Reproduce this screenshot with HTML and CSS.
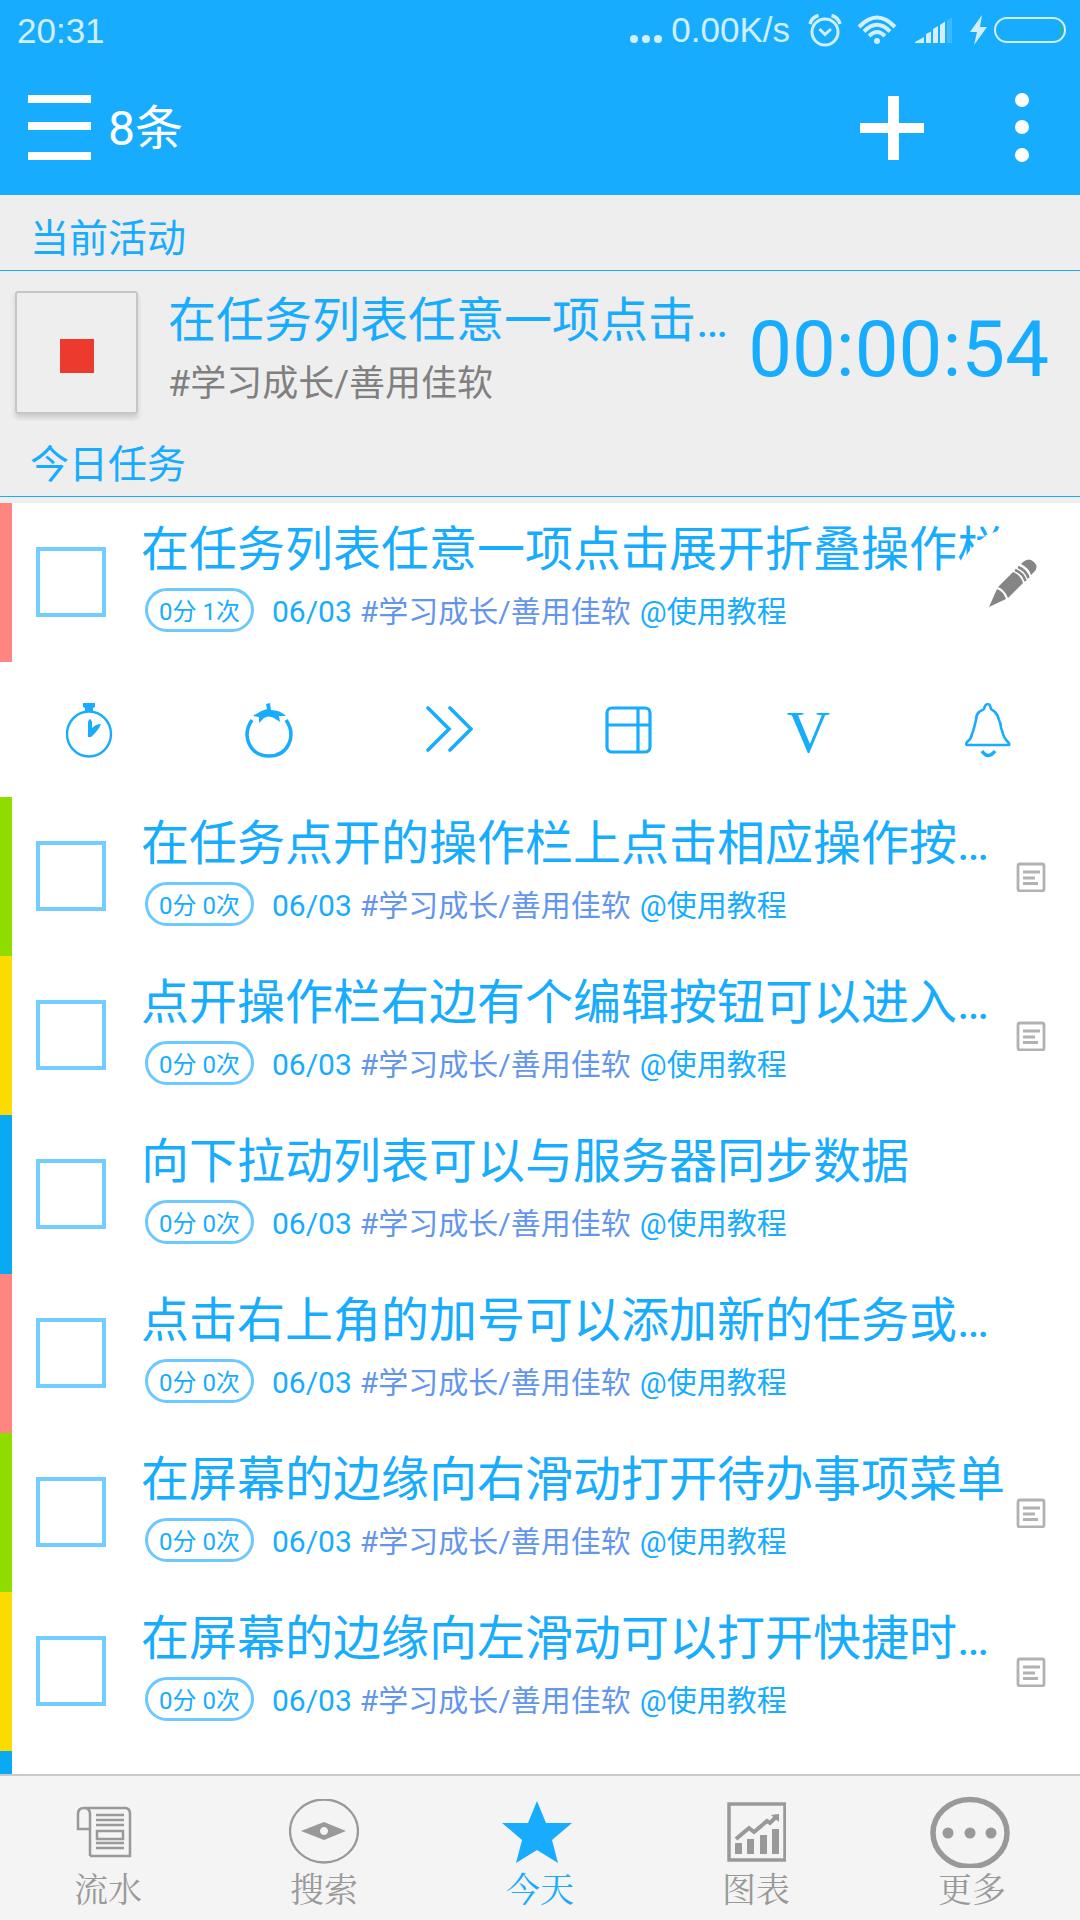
FILE: index.html
```html
<!DOCTYPE html>
<html lang="zh-CN">
<head>
<meta charset="utf-8">
<meta name="viewport" content="width=device-width, initial-scale=1">
<title>今日任务</title>
<link rel="stylesheet" href="styles.css">
</head>
<body>
<svg class="sprite" aria-hidden="true">
  <symbol id="note" viewBox="0 0 30 30">
    <rect x="2" y="2" width="26" height="27" rx="2" fill="none" stroke="#b2b2b2" stroke-width="2.800"/>
    <path d="M7 10H24M7 16H19M7 21.500H22" fill="none" stroke="#b2b2b2" stroke-width="3"/>
  </symbol>
</svg>

<div class="status">
  <span>20:31</span>
  <div class="status-right">
    <svg width="32" height="26" viewBox="0 0 32 26" fill="currentColor"><circle cx="4" cy="22" r="4"/><circle cx="16" cy="22" r="4"/><circle cx="28" cy="22" r="4"/></svg>
    <span class="speed">0.00K/s</span>
    <svg class="alarm" width="34" height="34" viewBox="0 0 34 34" fill="none" stroke="currentColor"><circle cx="17" cy="19" r="13" stroke-width="3"/><path d="M11.500 16l5.500 5.500 6-5.500" stroke-width="3"/><path d="M2 11Q4 4 10.500 2.500M32 11Q30 4 23.500 2.500" stroke-width="3.500"/></svg>
    <svg class="wifi" width="40" height="30" viewBox="0 0 40 30" fill="none" stroke="currentColor" stroke-width="4"><path d="M2 12Q20-7 38 12M7 16.500Q20 3 33 16.500M12 21Q20 13 28 21"/><circle cx="20" cy="26" r="3" fill="currentColor" stroke="none"/></svg>
    <svg class="signal" width="38" height="26" viewBox="0 0 38 26" fill="currentColor"><path d="M0 26v-1l9-5v6zM11 26V17l5-2.500V26zM18 26V12l5-3V26zM25 26V8l5-3.500V26z"/><path d="M32 26V3.500l5-3V26z" opacity=".2"/></svg>
    <svg class="bolt" width="17" height="30" viewBox="0 0 17 30" fill="currentColor"><path d="M12 0L0 17h7L4 30 17 12h-7z"/></svg>
    <svg class="battery" width="72" height="26" viewBox="0 0 72 26"><rect x="1" y="1" width="70" height="24" rx="12" fill="none" stroke="currentColor" stroke-width="2"/><path d="M67 7q3 6 0 12z" fill="#3fc31c"/></svg>
  </div>
</div>

<header class="appbar">
  <button class="icon-btn" aria-label="菜单"><svg width="63" height="66" viewBox="0 0 63 66" fill="#fff"><path d="M0 0h63v8H0zM0 27h63v8H0zM0 57h63v8H0z"/></svg></button>
  <h1>8条</h1>
  <button class="icon-btn" aria-label="添加"><svg width="64" height="66" viewBox="0 0 64 66" fill="#fff"><path d="M28 1h11v27h25v10H39v27H28V38H0V28h28z"/></svg></button>
  <button class="icon-btn overflow" aria-label="更多选项"><svg width="14" height="70" viewBox="0 0 14 70" fill="#fff"><circle cx="7" cy="7" r="7"/><circle cx="7" cy="34" r="7"/><circle cx="7" cy="62" r="7"/></svg></button>
</header>

<h2 class="section-title">当前活动</h2>
<section class="current">
  <button class="stop" aria-label="停止"><span></span></button>
  <div class="current-text">
    <p class="title">在任务列表任意一项点击…</p>
    <p class="project">#学习成长/善用佳软</p>
  </div>
  <time class="timer">00:00:54</time>
</section>
<h2 class="section-title">今日任务</h2>

<main class="list">
  <ul>
    <li class="task red">
      <input type="checkbox" id="t1">
      <div class="body">
        <label class="title" for="t1">在任务列表任意一项点击展开折叠操作栏</label>
        <div class="meta"><span class="pill">0分 1次</span><span class="date">06/03</span><span class="tag">#学习成长/善用佳软</span><span>@使用教程</span></div>
      </div>
      <button class="edit" aria-label="编辑"><svg width="50" height="50" viewBox="0 0 50 50"><g fill="#858585"><path d="M1 49L9 31Q15 33 18 41z"/><path d="M10 29L25 14Q33 17 35 25L20 40Q17 32 10 29z"/><path d="M35 4Q41-1 46 4T46 14L43 17Q41 10 33 6z"/></g><path d="M27 12Q35 15 37.500 23M30 9Q38 12 40.500 20" fill="none" stroke="#858585" stroke-width="2.600"/></svg></button>
    </li>
    <li class="actions">
      <button aria-label="计时"><svg width="48" height="56" viewBox="0 0 48 56"><ellipse cx="23" cy="32" rx="22" ry="22.500" fill="none" stroke="currentColor" stroke-width="2.400"/><path d="M17 1h12v4l-2 1v4h-8V6l-2-1zM22 35V20q2-6 4 0v6q4-4 9-4-2 6-10 13z" fill="currentColor"/></svg></button>
      <button aria-label="番茄钟"><svg width="50" height="56" viewBox="0 0 50 56"><path d="M8 18C-3 34 6 54 25 54S53 34 42 18" fill="none" stroke="currentColor" stroke-width="3.500"/><path d="M22 2l4-1 1 7q9 0 15 6l-7 0 1 6-6-4q-6-3-10 0l-5 5v-6l-6-1q6-5 14-7z" fill="currentColor"/></svg></button>
      <button aria-label="推迟"><svg width="48" height="48" viewBox="0 0 48 48" fill="none" stroke="currentColor" stroke-width="3.600" stroke-linecap="round"><path d="M3 2l21 21L3 44M25 2l21 21-21 21"/></svg></button>
      <button aria-label="四象限"><svg width="48" height="48" viewBox="0 0 48 48" fill="none" stroke="currentColor" stroke-width="3.200"><rect x="2" y="2" width="43" height="44" rx="5"/><path d="M2 19H45M33 2V46"/></svg></button>
      <button class="letter">V</button>
      <button aria-label="提醒"><svg width="48" height="56" viewBox="0 0 48 56" fill="none" stroke="currentColor" stroke-width="2.600"><path d="M24 2q-3 0-4 5l-5 3q-3 3-3 8-1 4-2 8-1 4-2 6-1 5-4 7-3 3-1 4l21 0 21 0q1-1-2-4-3-3-4-7-1-4-2-6 0-4-2-8-1-5-4-8l-4-3q-1-5-3-5z"/><path d="M18 49q6 9 13 0" stroke-width="3.500"/></svg></button>
    </li>
    <li class="task green">
      <input type="checkbox" id="t2">
      <div class="body">
        <label class="title" for="t2">在任务点开的操作栏上点击相应操作按…</label>
        <div class="meta"><span class="pill">0分 0次</span><span class="date">06/03</span><span class="tag">#学习成长/善用佳软</span><span>@使用教程</span></div>
      </div>
      <svg class="note"><use href="#note"/></svg>
    </li>
    <li class="task yellow">
      <input type="checkbox" id="t3">
      <div class="body">
        <label class="title" for="t3">点开操作栏右边有个编辑按钮可以进入…</label>
        <div class="meta"><span class="pill">0分 0次</span><span class="date">06/03</span><span class="tag">#学习成长/善用佳软</span><span>@使用教程</span></div>
      </div>
      <svg class="note"><use href="#note"/></svg>
    </li>
    <li class="task blue">
      <input type="checkbox" id="t4">
      <div class="body">
        <label class="title" for="t4">向下拉动列表可以与服务器同步数据</label>
        <div class="meta"><span class="pill">0分 0次</span><span class="date">06/03</span><span class="tag">#学习成长/善用佳软</span><span>@使用教程</span></div>
      </div>
    </li>
    <li class="task red">
      <input type="checkbox" id="t5">
      <div class="body">
        <label class="title" for="t5">点击右上角的加号可以添加新的任务或…</label>
        <div class="meta"><span class="pill">0分 0次</span><span class="date">06/03</span><span class="tag">#学习成长/善用佳软</span><span>@使用教程</span></div>
      </div>
    </li>
    <li class="task green">
      <input type="checkbox" id="t6">
      <div class="body">
        <label class="title" for="t6">在屏幕的边缘向右滑动打开待办事项菜单</label>
        <div class="meta"><span class="pill">0分 0次</span><span class="date">06/03</span><span class="tag">#学习成长/善用佳软</span><span>@使用教程</span></div>
      </div>
      <svg class="note"><use href="#note"/></svg>
    </li>
    <li class="task yellow">
      <input type="checkbox" id="t7">
      <div class="body">
        <label class="title" for="t7">在屏幕的边缘向左滑动可以打开快捷时…</label>
        <div class="meta"><span class="pill">0分 0次</span><span class="date">06/03</span><span class="tag">#学习成长/善用佳软</span><span>@使用教程</span></div>
      </div>
      <svg class="note"><use href="#note"/></svg>
    </li>
    <li class="task blue"></li>
  </ul>
</main>

<nav class="tabs">
  <a href="#log"><svg width="64" height="52" viewBox="0 0 64 52" fill="none" stroke="currentColor" stroke-width="2.500"><path d="M14 50V8Q14 2 8 2T2 8V23H14M8 2H49Q54 2 54 8V50H14"/><path d="M20 9H48M20 14H48M20 19H48M20 37H48M20 42H48"/><rect x="21" y="25" width="26" height="8"/></svg><span>流水</span></a>
  <a href="#search"><svg width="70" height="66" viewBox="0 0 70 66"><ellipse cx="35" cy="32" rx="34" ry="31.500" fill="none" stroke="currentColor" stroke-width="2.300"/><path fill="currentColor" fill-rule="evenodd" d="M12 32L35 23 57 32 35 41zM35 28a4 4 0 1 0 .1 0z"/></svg><span>搜索</span></a>
  <a href="#today" class="active"><svg width="76" height="62" viewBox="0 0 76 62" fill="currentColor"><path d="M35 0L44 22H70L50 39 56 62 35 49 14 62 20 39 0 22H26z"/></svg><span>今天</span></a>
  <a href="#chart"><svg width="60" height="60" viewBox="0 0 60 60"><rect x="3" y="2" width="56" height="56" fill="none" stroke="currentColor" stroke-width="3.500"/><path fill="currentColor" d="M9 41h7v11H9zM21 37h7v15h-7zM34 33h7v19h-7zM46 27h7v25h-7zM45 13l8-1v8z"/><path d="M10 37L23 26 28 30 41 19 44 21 51 14" fill="none" stroke="currentColor" stroke-width="4"/></svg><span>图表</span></a>
  <a href="#more"><svg width="84" height="72" viewBox="0 0 84 72"><ellipse cx="40" cy="37" rx="37" ry="33.500" fill="none" stroke="currentColor" stroke-width="5.500"/><g fill="currentColor"><circle cx="18" cy="37" r="5.500"/><circle cx="40" cy="37" r="5.500"/><circle cx="61" cy="37" r="5.500"/></g></svg><span>更多</span></a>
</nav>
</body>
</html>
```

FILE: styles.css
```css
:root {
  --blue: #18acff;
  --panel: #eeeeee;
}

* {
  box-sizing: border-box;
}

body {
  margin: 0;
  height: 100vh;
  display: flex;
  flex-direction: column;
  background: #fff;
  color: var(--blue);
  font-family: Roboto, "Noto Sans CJK SC", sans-serif;
}

h1, h2, p, ul {
  margin: 0;
  padding: 0;
  font-weight: 400;
  list-style: none;
}

button {
  padding: 0;
  border: 0;
  background: none;
  color: inherit;
  font: inherit;
}

svg {
  display: block;
  flex: none;
}

.sprite {
  position: absolute;
  width: 0;
  height: 0;
}

/* status bar */
.status {
  flex: none;
  display: flex;
  justify-content: space-between;
  height: 60px;
  padding: 0 14px 0 17px;
  background: var(--blue);
  color: #d1efff;
  font: 35px/62px "Liberation Sans", sans-serif;
}

.status-right {
  display: flex;
  align-items: center;
}

.speed {
  margin: 0 18px 0 9px;
}

.wifi {
  margin-left: 15px;
}

.signal {
  margin: 0 17px 0 18px;
}

.battery {
  margin-left: 7px;
}

/* app bar */
.appbar {
  flex: none;
  display: flex;
  align-items: center;
  height: 135px;
  padding: 0 51px 0 28px;
  background: var(--blue);
  color: #fff;
}

.appbar h1 {
  flex: 1;
  padding: 3px 0 0 17px;
  font-size: 48px;
  line-height: 60px;
}

.overflow {
  margin-left: 91px;
}

/* panels */
.section-title {
  flex: none;
  padding: 16px 30px 3px;
  border-bottom: 1px solid var(--blue);
  background: var(--panel);
  font-size: 39px;
  line-height: 56px;
}

.current {
  flex: none;
  display: flex;
  align-items: flex-start;
  padding: 20px 31px 7px 15px;
  background: var(--panel);
}

.stop {
  display: grid;
  place-items: center;
  flex: none;
  width: 123px;
  height: 123px;
  border: 2px solid #c6c6c6;
  border-radius: 3px;
  box-shadow: 0 4px 5px rgba(0, 0, 0, 0.14);
}

.stop span {
  width: 34px;
  height: 34px;
  margin-top: 6px;
  background: #ed3a2e;
}

.current-text {
  flex: 1;
  min-width: 0;
  padding-left: 30px;
}

.title {
  display: block;
  overflow: hidden;
  font-size: 48px;
  line-height: 60px;
  white-space: nowrap;
}

.project {
  margin-top: 10px;
  color: #808080;
  font-size: 36px;
  line-height: 46px;
}

.timer {
  font-size: 78px;
  line-height: 118px;
}

/* task list */
.list {
  flex: 1;
  min-height: 0;
  overflow-y: auto;
  border-top: 6px solid var(--panel);
  scrollbar-width: none;
}

.task {
  position: relative;
  display: flex;
  align-items: center;
  min-height: 159px;
  padding: 0 34px 0 24px;
  border-left: 12px solid;
}

.red { border-color: #ff8581; }
.green { border-color: #8fdd00; }
.yellow { border-color: #fbdb00; }
.blue { border-color: #09a9f3; }

.task input {
  flex: none;
  appearance: none;
  width: 70px;
  height: 70px;
  margin: 0 0 2px;
  border: 4px solid #73cdff;
}

.body {
  flex: 1;
  min-width: 0;
  padding: 17px 0 30px 35px;
}

.meta {
  display: flex;
  align-items: center;
  height: 44px;
  margin-top: 8px;
  padding-left: 4px;
  font-size: 30px;
  line-height: 40px;
  white-space: nowrap;
}

.pill {
  width: 109px;
  height: 44px;
  padding-top: 2px;
  border: 3px solid #6bc9ff;
  border-radius: 22px;
  font-size: 24px;
  line-height: 38px;
  text-align: center;
}

.date {
  margin-left: 18px;
}

.meta .date,
.meta .date ~ span {
  padding-top: 4px;
}

.tag {
  margin: 0 9px 0 8px;
  color: #6495ed;
}

.note {
  width: 30px;
  height: 30px;
}

.edit {
  position: absolute;
  top: 26px;
  right: 13px;
  display: grid;
  place-items: center;
  width: 108px;
  height: 108px;
  border-radius: 50%;
  background: #fff;
}

.actions {
  display: grid;
  grid-template-columns: repeat(6, 1fr);
  height: 135px;
  padding-right: 2px;
}

.actions button {
  display: grid;
  place-items: center;
}

.actions .letter {
  padding-top: 4px;
  font: 60px/60px "Liberation Serif", serif;
}

/* bottom tabs */
.tabs {
  flex: none;
  display: grid;
  grid-template-columns: repeat(5, 1fr);
  height: 146px;
  border-top: 2px solid #c8c8ce;
  background: #f4f4f4;
}

.tabs a {
  display: grid;
  grid-template-rows: 74px 44px;
  place-items: center;
  align-content: start;
  padding-top: 19px;
  color: #999;
  font-family: "Liberation Serif", "Noto Serif CJK SC", "Noto Sans CJK SC", serif;
  font-size: 34px;
  font-weight: 400;
  line-height: 46px;
  text-decoration: none;
}

.tabs .active {
  color: var(--blue);
}
```
